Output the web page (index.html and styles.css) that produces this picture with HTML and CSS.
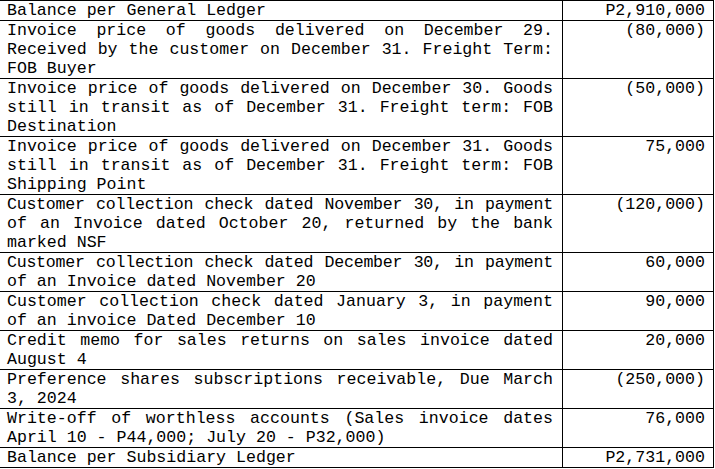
FILE: index.html
```html
<!DOCTYPE html>
<html lang="en">
<head>
<meta charset="utf-8">
<title>Reconciliation</title>
<link rel="stylesheet" href="styles.css">
</head>
<body>
<div class="recon">
  <div class="desc"><span>Balance per General Ledger</span></div>
  <div class="amt">P2,910,000</div>

  <div class="desc"><span>Invoice price of goods delivered on December 29.</span><span>Received by the customer on December 31. Freight Term:</span><span>FOB Buyer</span></div>
  <div class="amt">(80,000)</div>

  <div class="desc"><span>Invoice price of goods delivered on December 30. Goods</span><span>still in transit as of December 31. Freight term: FOB</span><span>Destination</span></div>
  <div class="amt">(50,000)</div>

  <div class="desc"><span>Invoice price of goods delivered on December 31. Goods</span><span>still in transit as of December 31. Freight term: FOB</span><span>Shipping Point</span></div>
  <div class="amt">75,000</div>

  <div class="desc"><span class="tight">Customer collection check dated November 30, in payment</span><span>of an Invoice dated October 20, returned by the bank</span><span>marked NSF</span></div>
  <div class="amt">(120,000)</div>

  <div class="desc"><span class="tight">Customer collection check dated December 30, in payment</span><span>of an Invoice dated November 20</span></div>
  <div class="amt">60,000</div>

  <div class="desc"><span>Customer collection check dated January 3, in payment</span><span>of an invoice Dated December 10</span></div>
  <div class="amt">90,000</div>

  <div class="desc"><span>Credit memo for sales returns on sales invoice dated</span><span>August 4</span></div>
  <div class="amt">20,000</div>

  <div class="desc"><span>Preference shares subscriptions receivable, Due March</span><span>3, 2024</span></div>
  <div class="amt">(250,000)</div>

  <div class="desc"><span>Write-off of worthless accounts (Sales invoice dates</span><span>April 10 - P44,000; July 20 - P32,000)</span></div>
  <div class="amt">76,000</div>

  <div class="desc"><span>Balance per Subsidiary Ledger</span></div>
  <div class="amt">P2,731,000</div>
</div>
</body>
</html>
```
FILE: styles.css
```css
html, body {
  margin: 0;
  padding: 0;
  background: #ffffff;
}

.recon {
  display: grid;
  grid-template-columns: 563px 151px;
  width: 714px;
  border-top: 1px solid #000;
  font-family: "Liberation Mono", "Courier New", monospace;
  font-size: 16.6px;
  line-height: 19px;
  color: #000;
}

.desc,
.amt {
  border-right: 1px solid #000;
  border-bottom: 1px solid #000;
}

.desc {
  padding: 0 9px 0 7px;
}

.desc > span {
  display: block;
  text-align: justify;
  text-align-last: justify;
}

.desc > span:last-child {
  text-align-last: left;
}

.desc > span.tight {
  letter-spacing: -0.25px;
}

.amt {
  padding: 0 8px 0 0;
  text-align: right;
}
```
